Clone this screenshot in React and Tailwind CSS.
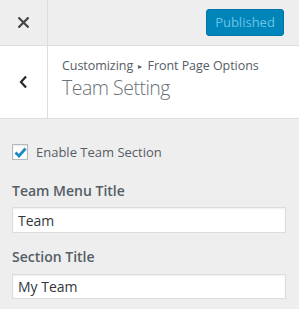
import React, { useState } from "react";

const App = () => {
  const [enabled, setEnabled] = useState(true);
  const [menuTitle, setMenuTitle] = useState("Team");
  const [sectionTitle, setSectionTitle] = useState("My Team");

  return (
    <div
      className="w-[299px] h-[309px] bg-[#eeeeee] overflow-hidden text-[#555d66]"
      style={{ fontFamily: '"Open Sans", "Noto Sans", sans-serif' }}
    >
      {/* Header bar */}
      <div className="flex h-[46px] border-b border-[#dddddd] bg-[#eeeeee]">
        <button className="w-[48px] flex items-center justify-center border-r border-[#dddddd] text-[#555d66]">
          <svg width="11" height="11" viewBox="0 0 11 11">
            <path d="M1.2 1.2 L9.8 9.8 M9.8 1.2 L1.2 9.8" stroke="#444" strokeWidth="2.2" strokeLinecap="square" />
          </svg>
        </button>
        <div className="flex-1 flex items-start justify-end pt-[9px] pr-[15px]">
          <button className="w-[78px] h-[27px] rounded-[3px] bg-[#0085ba] text-[#6cc3e3] text-[13px] leading-[25px] border border-[#0073aa]">
            Published
          </button>
        </div>
      </div>

      {/* Section title */}
      <div className="flex h-[73px] bg-white border-b border-[#dddddd]">
        <button className="w-[48px] flex items-center justify-center border-r border-[#dddddd]">
          <svg width="9" height="14" viewBox="0 0 9 14">
            <path d="M7 1.5 L2 7 L7 12.5" fill="none" stroke="#23282d" strokeWidth="2.2" />
          </svg>
        </button>
        <div className="flex-1 pl-[14px] pt-[12px]">
          <div className="text-[12.5px] leading-[16px] text-[#555d66] tracking-[-0.05px]">
            Customizing <span className="text-[8px] align-[1px] mx-[2px]">▸</span> Front Page Options
          </div>
          <div className="mt-[4px] text-[19.5px] leading-[20px] font-light text-[#6b7178] tracking-[-0.5px]">
            Team Setting
          </div>
        </div>
      </div>

      {/* Controls */}
      <div className="px-[12px] pt-[25px]">
        <label className="flex items-center gap-[8px] cursor-pointer">
          <span
            onClick={() => setEnabled(!enabled)}
            className="w-[16px] h-[16px] bg-white border border-[#b4b9be] shadow-[inset_0_1px_2px_rgba(0,0,0,0.1)] flex items-center justify-center"
          >
            {enabled && (
              <svg width="13" height="11" viewBox="0 0 13 11">
                <path d="M1.5 5.5 L5 9 L11.5 1.5" fill="none" stroke="#1e8cbe" strokeWidth="2.8" />
              </svg>
            )}
          </span>
          <span className="text-[13px] leading-[16px] text-[#555d66]">Enable Team Section</span>
        </label>

        <div className="mt-[21px] text-[14px] leading-[20px] font-semibold text-[#555d66]">
          Team Menu Title
        </div>
        <input
          type="text"
          value={menuTitle}
          onChange={(e) => setMenuTitle(e.target.value)}
          className="block mt-[6px] w-[274px] h-[26px] bg-white border border-[#dddddd] shadow-[inset_0_1px_2px_rgba(0,0,0,0.07)] px-[5px] text-[14px] text-[#32373c] outline-none"
        />

        <div className="mt-[14px] text-[14px] leading-[20px] font-semibold text-[#555d66]">
          Section Title
        </div>
        <input
          type="text"
          value={sectionTitle}
          onChange={(e) => setSectionTitle(e.target.value)}
          className="block mt-[7px] w-[274px] h-[25px] bg-white border border-[#dddddd] shadow-[inset_0_1px_2px_rgba(0,0,0,0.07)] px-[5px] text-[14px] text-[#32373c] outline-none"
        />
      </div>
    </div>
  );
};

export default App;
